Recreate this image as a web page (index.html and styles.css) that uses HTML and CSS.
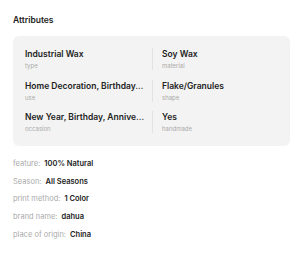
FILE: index.html
```html
<!DOCTYPE html>
<html>
<head>
    <title>Attributes</title>
    <link rel="stylesheet" href="styles.css">
</head>
<body>
    <div class="panel">
        <h2 class="title">Attributes</h2>
        <div class="card">
            <div class="attr">
                <div class="value">Industrial Wax</div>
                <div class="key">type</div>
            </div>
            <div class="attr right">
                <div class="value">Soy Wax</div>
                <div class="key">material</div>
            </div>
            <div class="attr">
                <div class="value">Home Decoration, Birthday, Wedding, Party</div>
                <div class="key">use</div>
            </div>
            <div class="attr right">
                <div class="value">Flake/Granules</div>
                <div class="key">shape</div>
            </div>
            <div class="attr">
                <div class="value">New Year, Birthday, Anniversary, Christmas</div>
                <div class="key">occasion</div>
            </div>
            <div class="attr right">
                <div class="value">Yes</div>
                <div class="key">handmade</div>
            </div>
        </div>
        <ul class="props">
            <li><span class="label">feature:</span><span class="val">100% Natural</span></li>
            <li><span class="label">Season:</span><span class="val">All Seasons</span></li>
            <li><span class="label">print method:</span><span class="val">1 Color</span></li>
            <li><span class="label">brand name:</span><span class="val">dahua</span></li>
            <li><span class="label">place of origin:</span><span class="val">China</span></li>
        </ul>
    </div>
</body>
</html>
```

FILE: styles.css
```css
body {
    font-family: Inter, "Noto Sans", sans-serif;
    margin: 0;
    background: #fff;
    color: #222;
}
.panel {
    height: 262px;
    box-sizing: border-box;
    padding: 15px 10px 0 13px;
    border-left: 3px solid #f7f7f7;
    margin-left: -3px;
}
.title {
    font-size: 8.5px;
    font-weight: 600;
    margin: 0 0 10px;
    line-height: 11px;
}
.card {
    background: #f3f3f3;
    border-radius: 6px;
    padding: 12px 12px 13px 12px;
    display: grid;
    grid-template-columns: 127px 1fr;
    row-gap: 9.5px;
}
.attr {
    min-width: 0;
    padding-right: 6px;
}
.attr.right {
    border-left: 1px solid #e2e2e2;
    padding-left: 9px;
}
.value {
    font-size: 8.5px;
    font-weight: 600;
    line-height: 12px;
    white-space: nowrap;
    overflow: hidden;
    text-overflow: ellipsis;
}
.key {
    font-size: 6px;
    color: #aaa;
    line-height: 8px;
    margin-top: 2px;
}
.props {
    list-style: none;
    margin: 13px 0 0;
    padding: 0;
}
.props li {
    font-size: 7.5px;
    line-height: 10px;
    margin-bottom: 7.7px;
}
.label {
    color: #aaa;
    margin-right: 4px;
}
.val {
    font-weight: 600;
}
```
